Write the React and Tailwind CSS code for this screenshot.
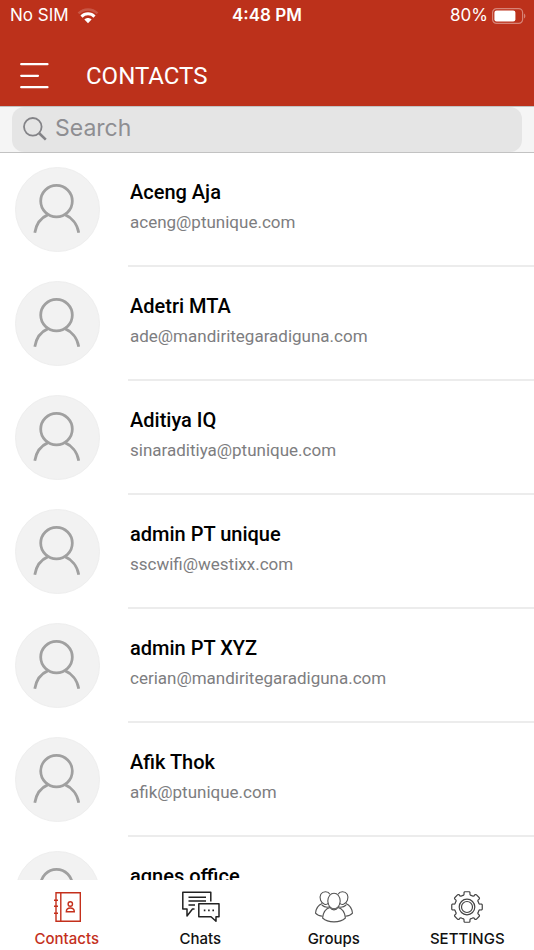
import { useState } from "react";

const contacts = [
  { name: "Aceng Aja", email: "aceng@ptunique.com" },
  { name: "Adetri MTA", email: "ade@mandiritegaradiguna.com" },
  { name: "Aditiya IQ", email: "sinaraditiya@ptunique.com" },
  { name: "admin PT unique", email: "sscwifi@westixx.com" },
  { name: "admin PT XYZ", email: "cerian@mandiritegaradiguna.com" },
  { name: "Afik Thok", email: "afik@ptunique.com" },
  { name: "agnes office", email: "" },
];

function WifiIcon() {
  return (
    <svg width="22" height="16" viewBox="0 0 22 16" fill="none" aria-hidden="true">
      <path d="M1.500 5.400C7 .2 15 .2 20.500 5.400" stroke="#fff" strokeOpacity="0.18" strokeWidth="2.600" />
      <path d="M4.500 8.600C8.200 4.900 13.800 4.900 17.500 8.600" stroke="#fff" strokeWidth="3" />
      <path d="M7.400 11.600C9.400 9.600 12.600 9.600 14.600 11.600L11 15.200Z" fill="#fff" />
    </svg>
  );
}

function BatteryIcon() {
  return (
    <svg width="34" height="16" viewBox="0 0 34 16" fill="none" aria-hidden="true">
      <rect x="0.6" y="0.6" width="30" height="14.8" rx="4" stroke="#fff" strokeOpacity="0.4" strokeWidth="1.2" />
      <rect x="2.4" y="2.6" width="21" height="10.8" rx="2.2" fill="#fff" />
      <path d="M32 5.5C33.8 6.3 33.8 9.7 32 10.5Z" fill="#fff" fillOpacity="0.4" />
    </svg>
  );
}

function SearchIcon() {
  return (
    <svg width="24" height="24" viewBox="0 0 24 24" fill="none" stroke="#838387" aria-hidden="true">
      <circle cx="9.8" cy="9.8" r="8.8" strokeWidth="1.8" />
      <path d="M16.2 16.2L22.8 22.6" strokeWidth="2.6" />
    </svg>
  );
}

function Avatar() {
  return (
    <svg
      className="size-[85px] shrink-0 rounded-full border border-[#eeeeee] bg-[#f2f2f2]"
      viewBox="0 0 84 84"
      fill="none"
      stroke="#a0a0a0"
      strokeWidth="2.8"
      aria-hidden="true"
    >
      <circle cx="41" cy="33.500" r="16" />
      <path d="M19 65.500C20.500 56.500 26 50 32.500 47.200M49.500 47.200C56 50 62 56.500 63.500 65.500" />
    </svg>
  );
}

function ContactsIcon() {
  return (
    <svg width="40" height="32" viewBox="0 0 40 32" fill="none" stroke="currentColor" strokeWidth="1.4" aria-hidden="true">
      <path d="M9 1.800H33.300V30.200H9ZM13.800 1.800V30.200" />
      <path d="M7 9.300H11M7 15.300H11M7 22.300H11" strokeWidth="1.600" />
      <circle cx="23.300" cy="13" r="2.200" />
      <path d="M19.300 20.800C19.300 18 21.300 17 23.300 17S27.300 18 27.300 20.800Z" />
    </svg>
  );
}

function ChatsIcon() {
  return (
    <svg width="40" height="32" viewBox="0 0 40 32" fill="none" stroke="currentColor" strokeWidth="1.5" strokeLinejoin="round" aria-hidden="true">
      <path d="M30.800 10.500V1.200H2.800V18H7V25L12.500 18H14.500" />
      <path d="M8.500 6.200H26M8.500 10H26M8.500 14H15" />
      <path d="M18.800 12.800H39V25.800H36V30.300L31 25.800H18.800Z" />
      <path d="M23.800 19.300H25.400M28.100 19.300H29.700M32.400 19.300H34" strokeWidth="1.800" />
    </svg>
  );
}

function GroupsIcon() {
  return (
    <svg width="40" height="32" viewBox="0 0 40 32" fill="none" stroke="currentColor" strokeWidth="1.100" strokeLinejoin="round" aria-hidden="true">
      <ellipse cx="20" cy="10" rx="6.200" ry="7.800" />
      <path d="M15.800 3.200C14.500 .2 9 -.2 6.800 3.200C4.800 7 7 12.300 10.500 13.300C12 13.800 13.500 13.200 14.600 12" />
      <path d="M24.200 3.200C25.500 .2 31 -.2 33.200 3.200C35.200 7 33 12.300 29.500 13.300C28 13.800 26.500 13.200 25.400 12" />
      <path d="M8.200 12.500C4.500 14 2 17 1.500 22.200C3 24 5.500 25 8.700 25.300M7.800 14C10 16 13.500 16.500 15.800 15.800" />
      <path d="M31.800 12.500C35.500 14 38 17 38.500 22.200C37 24 34.500 25 31.300 25.300M32.200 14C30 16 26.500 16.500 24.200 15.800" />
      <path d="M16 16.500C12 17.500 9.200 20.500 8.600 27C14 32.200 26 32.200 31.400 27C30.800 20.500 28 17.500 24 16.500C22 19.600 18 19.600 16 16.500Z" />
    </svg>
  );
}

// outline of a cog with eight rounded teeth
function gearPath() {
  const at = (r, a) => `${(20 + r * Math.sin(a)).toFixed(2)} ${(16 - r * Math.cos(a)).toFixed(2)}`;
  let d = "";
  for (let i = 0; i < 8; i++) {
    const a = (i * Math.PI) / 4;
    d += `${i ? "A12.4 12.4 0 0 1 " : "M"}${at(12.4, a - 0.27)}`;
    d += `L${at(13.2, a - 0.22)}Q${at(15.4, a - 0.22)} ${at(15.4, a - 0.14)}`;
    d += `L${at(15.4, a + 0.14)}Q${at(15.4, a + 0.22)} ${at(13.2, a + 0.22)}L${at(12.4, a + 0.27)}`;
  }
  return `${d}A12.4 12.4 0 0 1 ${at(12.4, -0.27)}Z`;
}

function SettingsIcon() {
  return (
    <svg width="40" height="32" viewBox="0 0 40 32" fill="none" stroke="currentColor" strokeWidth="1.2" strokeLinejoin="round" aria-hidden="true">
      <path d={gearPath()} />
      <circle cx="20" cy="16" r="7.800" />
      <circle cx="20" cy="16" r="5.500" />
    </svg>
  );
}

const tabs = [
  { id: "contacts", label: "Contacts", icon: <ContactsIcon />, color: "text-[#222222]" },
  { id: "chats", label: "Chats", icon: <ChatsIcon />, color: "text-[#222222]" },
  { id: "groups", label: "Groups", icon: <GroupsIcon />, color: "text-[#555555]" },
  { id: "settings", label: "SETTINGS", icon: <SettingsIcon />, color: "text-[#444444]" },
];

export default function App() {
  const [search, setSearch] = useState("");
  const [active, setActive] = useState("contacts");

  const filtered = contacts.filter((c) =>
    c.name.toLowerCase().includes(search.toLowerCase())
  );

  return (
    <div className="flex h-screen flex-col bg-white font-['Roboto',sans-serif]">
      <header className="shrink-0 bg-[#bc311b] text-white">
        <div className="grid h-8 grid-cols-3 items-center px-2 font-['Inter',sans-serif] text-[17px]">
          <div className="flex items-center gap-2 pl-0.5">
            <span>No SIM</span>
            <WifiIcon />
          </div>
          <span className="text-center font-semibold">4:48 PM</span>
          <div className="flex items-center justify-end gap-1">
            <span>80%</span>
            <BatteryIcon />
          </div>
        </div>
        <div className="flex h-[74px] items-center gap-9 px-5 pt-3.5">
          <button type="button" aria-label="Menu">
            <svg width="30" height="28" viewBox="0 0 30 28" stroke="#fff" strokeWidth="2.200" strokeLinecap="round" aria-hidden="true">
              <path d="M1.200 2.200H27.500M1.200 13.800H18M1.200 25.200H27.500" />
            </svg>
          </button>
          <h1 className="text-2xl">CONTACTS</h1>
        </div>
      </header>

      <div className="shrink-0 border-t border-b border-[#c2c2c2] bg-[#f5f5f5] px-3">
        <label className="flex h-[45px] items-center gap-2 rounded-xl bg-[#e5e5e5] px-[11px] pb-0.5">
          <SearchIcon />
          <input
            type="text"
            placeholder="Search"
            aria-label="Search"
            className="min-w-0 flex-1 bg-transparent font-['Inter',sans-serif] text-[23px] text-black outline-none placeholder:text-[#8e8e92]"
            value={search}
            onChange={(e) => setSearch(e.target.value)}
          />
        </label>
      </div>

      <ul className="min-h-0 flex-1 overflow-y-auto [scrollbar-width:none]">
        {filtered.map((c) => (
          <li key={c.name} className="flex h-[114px] pl-[15px]">
            <div className="pt-3.5">
              <Avatar />
            </div>
            <div className="ml-7 min-w-0 flex-1 border-b-2 border-[#ececec] pt-[23px] pl-0.5">
              <p className="truncate text-xl leading-8 font-medium text-black">{c.name}</p>
              <p className="truncate text-[17px] leading-7 text-[#7d7d80]">{c.email}</p>
            </div>
          </li>
        ))}
      </ul>

      <nav className="grid h-[70px] shrink-0 grid-cols-4 bg-white">
        {tabs.map((tab) => (
          <button
            key={tab.id}
            type="button"
            onClick={() => setActive(tab.id)}
            className={`flex flex-col items-center gap-1.5 pt-[11px] ${active === tab.id ? "text-[#c4301c]" : tab.color}`}
          >
            {tab.icon}
            <span
              className={`font-['Inter',sans-serif] text-[15px] leading-5 font-medium ${active === tab.id ? "" : "text-[#111111]"}`}
            >
              {tab.label}
            </span>
          </button>
        ))}
      </nav>
    </div>
  );
}
